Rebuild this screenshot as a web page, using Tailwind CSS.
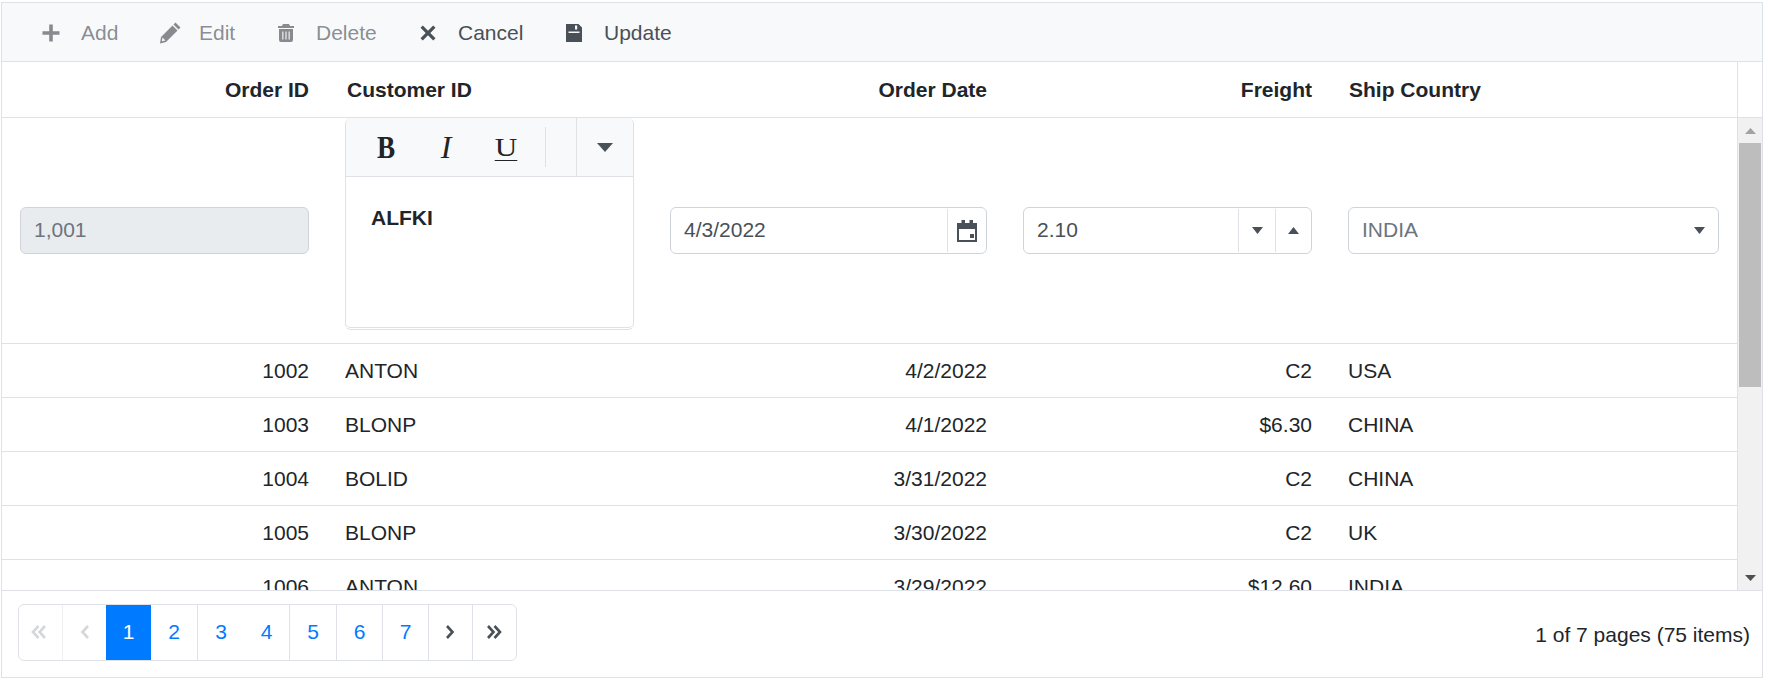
<!DOCTYPE html>
<html lang="en">
<head>
    <meta charset="UTF-8">
    <title>Grid - Inline Edit</title>
    <script src="https://cdn.jsdelivr.net/npm/@tailwindcss/browser@4"></script>
</head>
<body class="h-[681px] overflow-hidden bg-white font-['Liberation_Sans',Arial,sans-serif] text-[21px] text-[#212529]">
    <div class="ml-[1px] mt-[2px] flex h-[676px] w-[1762px] flex-col border border-[#dee2e6]">

        <!-- toolbar -->
        <div class="flex h-[59px] shrink-0 items-center border-b border-[#dee2e6] bg-[#f8f9fa] pt-[1px] text-[#495057]">
            <div class="ml-[40px] flex w-[117px] items-center gap-[21px] text-[#495057]/65">
                <svg class="h-[18px] w-[18px]" viewBox="0 0 18 18" fill="currentColor"><path d="M7.200 .5h3.600v6.700h6.700v3.600h-6.700v6.700H7.200v-6.700H.5V7.200h6.700z"/></svg>
                <span>Add</span>
            </div>
            <div class="flex w-[119px] items-center gap-[18px] text-[#495057]/65">
                <svg class="h-[22px] w-[22px]" viewBox="0 0 22 22" fill="currentColor"><path d="M16.500.5l5 5-2 2-5-5zM13.500 3.500l5 5L7 20l-6 1.500L2 15zM3.600 15.600l-.8 3.600 3.600-.8z" fill-rule="evenodd"/></svg>
                <span>Edit</span>
            </div>
            <div class="flex w-[142px] items-center gap-[22px] text-[#495057]/65">
                <svg class="h-[18px] w-[16px]" viewBox="0 0 16 18" fill="currentColor"><path d="M5 0h6l1 2h4v2H0V2h4zM1 5h14v11a2 2 0 0 1-2 2H3a2 2 0 0 1-2-2zM4.300 7.500v8h1.100v-8zm3.150 0v8h1.100v-8zm3.150 0v8h1.100v-8z" fill-rule="evenodd"/></svg>
                <span>Delete</span>
            </div>
            <div class="flex w-[146px] items-center gap-[22px]">
                <svg class="h-[16px] w-[16px]" viewBox="0 0 16 16" fill="currentColor"><path d="M2.800.5L8 5.700 13.200.5l2.300 2.300L10.300 8l5.200 5.200-2.300 2.300L8 10.300 2.800 15.500.5 13.200 5.700 8 .5 2.800z"/></svg>
                <span>Cancel</span>
            </div>
            <div class="flex items-center gap-[22px]">
                <svg class="h-[18px] w-[16px]" viewBox="0 0 16 18" fill="currentColor"><path d="M0 0h12.500L16 3.500V18H0zM9 1.500v4h2.200v-4zM2.500 7.500V9h11V7.500z" fill-rule="evenodd"/></svg>
                <span>Update</span>
            </div>
        </div>

        <!-- header -->
        <div class="flex h-[56px] shrink-0 border-b border-[#dee2e6] font-bold">
            <div class="grid flex-1 grid-cols-[325px_325px_353px_325px_1fr] items-center">
                <div class="px-[18px] text-right">Order ID</div>
                <div class="px-[20px]">Customer ID</div>
                <div class="px-[18px] text-right">Order Date</div>
                <div class="px-[18px] text-right">Freight</div>
                <div class="px-[19px]">Ship Country</div>
            </div>
            <div class="w-[25px] border-l border-[#dee2e6]"></div>
        </div>

        <!-- content -->
        <div class="flex min-h-0 flex-1 overflow-hidden">
            <div class="min-w-0 flex-1">
                <!-- edit row -->
                <div class="grid h-[226px] grid-cols-[325px_325px_353px_325px_1fr] items-center border-b border-[#dee2e6]">
                    <div class="px-[18px]">
                        <div class="flex h-[47px] items-center rounded-md border border-[#ced4da] bg-[#e9ecef] px-[13px] pb-[1px] text-[#6c757d]">1,001</div>
                    </div>
                    <div class="self-start pl-[18px] pr-[18px]">
                        <div class="h-[212px] overflow-hidden rounded-md border-x border-b-[3px] border-[#dee2e6] [border-bottom-style:double]">
                            <div class="flex h-[59px] items-center border-b border-[#dee2e6] bg-[#f8f9fa] font-['Liberation_Serif',serif] text-[#212529]">
                                <span class="ml-[10px] w-[60px] scale-x-[.85] text-center text-[32px] font-bold">B</span>
                                <span class="w-[60px] text-center text-[32px] italic">I</span>
                                <span class="w-[60px] scale-x-[1.2] text-center text-[26px] underline decoration-1 underline-offset-[4px]">U</span>
                                <span class="ml-[9px] h-[40px] w-[1px] bg-[#dee2e6]"></span>
                                <span class="ml-[30px] flex h-full flex-1 items-center justify-center border-l border-[#dee2e6]">
                                    <svg class="h-[9px] w-[16px]" viewBox="0 0 16 9" fill="#495057"><path d="M0 0h16L8 9z"/></svg>
                                </span>
                            </div>
                            <div class="px-[25px] pt-[25px] font-bold">ALFKI</div>
                        </div>
                    </div>
                    <div class="px-[18px]">
                        <div class="flex h-[47px] items-stretch rounded-md border border-[#ced4da] p-[1px] text-[#495057]">
                            <div class="flex flex-1 items-center pb-[1px] pl-[12px]">4/3/2022</div>
                            <div class="flex w-[38px] items-center justify-center border-l border-[#dee2e6]">
                                <svg class="h-[22px] w-[20px]" viewBox="0 0 20 22" fill="#495057"><path d="M0 3h4.500V0H8v3h4.500V0H16v3h4v19H0zM2 9v11h16V9zM13 14h4v4h-4z" fill-rule="evenodd"/></svg>
                            </div>
                        </div>
                    </div>
                    <div class="px-[18px]">
                        <div class="flex h-[47px] items-stretch rounded-md border border-[#ced4da] p-[1px] text-[#495057]">
                            <div class="flex flex-1 items-center pb-[1px] pl-[12px]">2.10</div>
                            <div class="flex w-[37px] items-center justify-center border-l border-[#dee2e6]">
                                <svg class="h-[7px] w-[11px]" viewBox="0 0 11 7" fill="#495057"><path d="M0 0h11L5.500 7z"/></svg>
                            </div>
                            <div class="flex w-[35px] items-center justify-center border-l border-[#dee2e6]">
                                <svg class="h-[7px] w-[11px]" viewBox="0 0 11 7" fill="#495057"><path d="M0 7h11L5.500 0z"/></svg>
                            </div>
                        </div>
                    </div>
                    <div class="pl-[18px] pr-[18px]">
                        <div class="flex h-[47px] items-center justify-between rounded-md border border-[#ced4da] pb-[1px] pl-[13px] pr-[13px] text-[#6c757d]">
                            <span>INDIA</span>
                            <svg class="h-[7px] w-[11px]" viewBox="0 0 11 7" fill="#495057"><path d="M0 0h11L5.500 7z"/></svg>
                        </div>
                    </div>
                </div>

                <!-- data rows -->
                <div class="grid h-[54px] grid-cols-[325px_325px_353px_325px_1fr] items-center border-b border-[#dee2e6]">
                    <div class="px-[18px] text-right">1002</div>
                    <div class="px-[18px]">ANTON</div>
                    <div class="px-[18px] text-right">4/2/2022</div>
                    <div class="px-[18px] text-right">C2</div>
                    <div class="px-[18px]">USA</div>
                </div>
                <div class="grid h-[54px] grid-cols-[325px_325px_353px_325px_1fr] items-center border-b border-[#dee2e6]">
                    <div class="px-[18px] text-right">1003</div>
                    <div class="px-[18px]">BLONP</div>
                    <div class="px-[18px] text-right">4/1/2022</div>
                    <div class="px-[18px] text-right">$6.30</div>
                    <div class="px-[18px]">CHINA</div>
                </div>
                <div class="grid h-[54px] grid-cols-[325px_325px_353px_325px_1fr] items-center border-b border-[#dee2e6]">
                    <div class="px-[18px] text-right">1004</div>
                    <div class="px-[18px]">BOLID</div>
                    <div class="px-[18px] text-right">3/31/2022</div>
                    <div class="px-[18px] text-right">C2</div>
                    <div class="px-[18px]">CHINA</div>
                </div>
                <div class="grid h-[54px] grid-cols-[325px_325px_353px_325px_1fr] items-center border-b border-[#dee2e6]">
                    <div class="px-[18px] text-right">1005</div>
                    <div class="px-[18px]">BLONP</div>
                    <div class="px-[18px] text-right">3/30/2022</div>
                    <div class="px-[18px] text-right">C2</div>
                    <div class="px-[18px]">UK</div>
                </div>
                <div class="grid h-[54px] grid-cols-[325px_325px_353px_325px_1fr] items-center border-b border-[#dee2e6]">
                    <div class="px-[18px] text-right">1006</div>
                    <div class="px-[18px]">ANTON</div>
                    <div class="px-[18px] text-right">3/29/2022</div>
                    <div class="px-[18px] text-right">$12.60</div>
                    <div class="px-[18px]">INDIA</div>
                </div>
            </div>

            <!-- scrollbar -->
            <div class="flex w-[25px] shrink-0 flex-col items-center border-l border-[#dee2e6] bg-[#f1f1f1] px-[1px]">
                <div class="flex h-[25px] items-center justify-center">
                    <svg class="h-[6px] w-[11px]" viewBox="0 0 11 6" fill="#a3a3a3"><path d="M0 6h11L5.500 0z"/></svg>
                </div>
                <div class="h-[244px] w-full bg-[#bdbdbd]"></div>
                <div class="mt-auto flex h-[25px] items-center justify-center">
                    <svg class="h-[6px] w-[11px]" viewBox="0 0 11 6" fill="#505050"><path d="M0 0h11L5.500 6z"/></svg>
                </div>
            </div>
        </div>

        <!-- pager -->
        <div class="flex h-[87px] shrink-0 items-center justify-between border-t border-[#dee2e6] pb-[4px] pl-[16px] pr-[12px]">
            <div class="flex h-[57px] items-stretch rounded-md border border-[#dee2e6] text-[#007bff]">
                <div class="flex w-[44px] items-center justify-center border-r border-[#f0f0f0] pr-[3px]">
                    <svg class="h-[16px] w-[16px]" viewBox="0 0 16 16" fill="none" stroke="#d5d7d9" stroke-width="2.600"><path d="M7.500 2L2 8l5.500 6M14 2L8.500 8l5.500 6"/></svg>
                </div>
                <div class="flex w-[43px] items-center justify-center">
                    <svg class="h-[16px] w-[10px]" viewBox="0 0 10 16" fill="none" stroke="#d5d7d9" stroke-width="2.600"><path d="M8 2L2.500 8 8 14"/></svg>
                </div>
                <div class="flex w-[45px] items-center justify-center bg-[#007bff] text-white">1</div>
                <div class="flex w-[47px] items-center justify-center border-r border-[#dee2e6]">2</div>
                <div class="flex w-[46px] items-center justify-center">3</div>
                <div class="flex w-[46px] items-center justify-center border-r border-[#dee2e6]">4</div>
                <div class="flex w-[47px] items-center justify-center border-r border-[#dee2e6]">5</div>
                <div class="flex w-[46px] items-center justify-center border-r border-[#dee2e6]">6</div>
                <div class="flex w-[46px] items-center justify-center border-r border-[#dee2e6]">7</div>
                <div class="flex w-[44px] items-center justify-center border-r border-[#dee2e6] pr-[2px]">
                    <svg class="h-[16px] w-[10px]" viewBox="0 0 10 16" fill="none" stroke="#495057" stroke-width="2.600"><path d="M2 2l5.500 6L2 14"/></svg>
                </div>
                <div class="flex w-[43px] items-center justify-center pr-[1px]">
                    <svg class="h-[16px] w-[16px]" viewBox="0 0 16 16" fill="none" stroke="#495057" stroke-width="2.600"><path d="M2 2l5.500 6L2 14M8.500 2L14 8l-5.500 6"/></svg>
                </div>
            </div>
            <div class="pt-[5px]">1 of 7 pages (75 items)</div>
        </div>
    </div>
</body>
</html>
